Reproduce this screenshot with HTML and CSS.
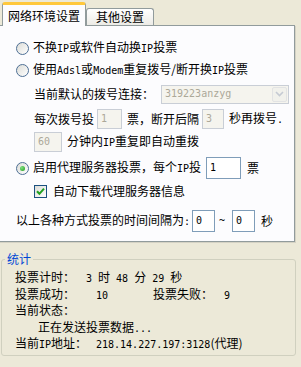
FILE: index.html
```html
<!DOCTYPE html>
<html>
<head>
<meta charset="utf-8">
<link rel="stylesheet" href="styles.css">
</head>
<body>
<div class="tabs">
  <div class="tab active">网络环境设置</div>
  <div class="tab">其他设置</div>
</div>
<div class="panel">
  <div class="row r1"><span class="radio"></span><span>不换<span class="en">IP</span>或软件自动换<span class="en">IP</span>投票</span></div>
  <div class="row r2"><span class="radio"></span><span>使用<span class="en">Adsl</span>或<span class="en">Modem</span>重复拨号/断开换<span class="en">IP</span>投票</span></div>
  <div class="row r3 indent"><span>当前默认的拨号连接：</span>
    <div class="combo"><span class="en">319223anzyg</span><span class="combo-btn"><svg width="9" height="6" viewBox="0 0 9 6"><path d="M1 1 L4.5 4.5 L8 1" fill="none" stroke="#C5CAD3" stroke-width="1.6"/></svg></span></div>
  </div>
  <div class="row r4 indent"><span>每次拨号投</span><span class="input disabled w25"><span class="en">1</span></span><span class="sp5">票，</span><span>断开后隔</span><span class="input disabled w22"><span class="en">3</span></span><span class="sp5">秒再拨号<span class="en">.</span></span></div>
  <div class="row r5 indent"><span class="input disabled w28 first"><span class="en">60</span></span><span class="sp5">分钟内<span class="en">IP</span>重复即自动重拨</span></div>
  <div class="row r6"><span class="radio checked"></span><span>启用代理服务器投票，每个<span class="en">IP</span>投</span><span class="input w35 tall"><span class="en">1</span></span><span class="sp6">票</span></div>
  <div class="row r7 indent"><span class="check"><svg width="9" height="9" viewBox="0 0 9 9"><path d="M1 4.2 L3.4 6.8 L8 1.6" fill="none" stroke="#21A121" stroke-width="2"/></svg></span><span>自动下载代理服务器信息</span></div>
  <div class="row r8"><span>以上各种方式投票的时间间隔为<span class="en">:</span></span><span class="input w23 tall sp2"><span class="en">0</span></span><span class="tilde">~</span><span class="input w23 tall"><span class="en">0</span></span><span class="sp6">秒</span></div>
</div>
<fieldset class="stats">
  <legend>统计</legend>
  <div class="stat-body">
    <div class="stat-row"><span class="lbl l71">投票计时：</span><span class="en">3 </span>时<span class="en"> 48 </span>分<span class="en"> 29 </span>秒</div>
    <div class="stat-row"><span class="lbl l81">投票成功：</span><span class="en v57">10</span><span class="lbl l71">投票失败：</span><span class="en">9</span></div>
    <div class="stat-row"><span>当前状态：</span></div>
    <div class="stat-row status">正在发送投票数据<span class="en">...</span></div>
    <div class="stat-row"><span class="lbl l81">当前<span class="en">IP</span>地址：</span><span class="en">218.14.227.197:3128</span><span>(代理)</span></div>
  </div>
</fieldset>
</body>
</html>
```
FILE: styles.css
```css
* { box-sizing: border-box; }
html, body { margin: 0; padding: 0; }
body {
  width: 301px;
  height: 367px;
  overflow: hidden;
  background: #ECE9D8;
  font-family: "Noto Sans CJK SC", sans-serif;
  font-size: 12px;
  line-height: 14px;
  color: #000;
}
.en { font-family: "DejaVu Sans Mono", monospace; font-size: 10px; }

.tabs {
  display: flex;
  align-items: flex-end;
  height: 25px;
  padding-left: 2px;
  position: relative;
  z-index: 1;
}
.tab {
  width: 68px;
  height: 17px;
  border: 1px solid #919B9C;
  border-bottom: none;
  border-radius: 3px 3px 0 0;
  background: linear-gradient(#FFFFFF, #ECEBE6);
  display: flex;
  justify-content: center;
  align-items: center;
}
.tab.active {
  width: 84px;
  height: 24px;
  margin-bottom: -1px;
  background: #FCFCFE;
  border-top: 3px solid #FFC83C;
  box-shadow: inset 0 -1px 0 #FCFCFE;
}

.panel {
  margin-left: -1px;
  width: 296px;
  height: 217px;
  border: 1px solid #919B9C;
  background: #FCFCFE;
  padding-top: 11px;
  box-shadow: 1px 1px 0 #D5D2C4;
}
.row { display: flex; align-items: center; white-space: nowrap; }
.r1 { height: 22px; padding-left: 16px; }
.r2 { height: 22px; padding-left: 16px; }
.r3 { height: 26px; }
.r4 { height: 24px; }
.r5 { height: 22px; }
.r6 { height: 30px; padding-left: 16px; }
.r7 { height: 16px; }
.r8 { height: 22px; margin-top: 11px; padding-left: 16px; }
.indent { padding-left: 34px; }

.radio {
  width: 13px;
  height: 13px;
  border-radius: 50%;
  border: 1px solid #4E6F95;
  background: linear-gradient(135deg, #DCDCD7, #FFFFFF);
  margin-right: 4px;
  display: flex;
  align-items: center;
  justify-content: center;
  flex: none;
}
.radio.checked::after {
  content: "";
  width: 5px;
  height: 5px;
  border-radius: 50%;
  background: radial-gradient(circle at 35% 35%, #7FE07F, #1E9A1E);
}
.check {
  width: 13px;
  height: 13px;
  border: 1px solid #1C5180;
  background: linear-gradient(135deg, #DCDCD7, #FFFFFF);
  margin-right: 6px;
  display: flex;
  align-items: center;
  justify-content: center;
  flex: none;
}

.combo {
  margin-left: 7px;
  width: 128px;
  height: 19px;
  border: 1px solid #C9CED6;
  background: #F5F4EE;
  color: #ACA899;
  display: flex;
  align-items: center;
  justify-content: space-between;
  padding-left: 3px;
}
.combo-btn {
  width: 15px;
  height: 15px;
  margin-right: 1px;
  border-radius: 2px;
  background: #F1F1EC;
  border: 1px solid #E2E3E4;
  display: flex;
  align-items: center;
  justify-content: center;
}

.input {
  height: 20px;
  border: 1px solid #7F9DB9;
  background: #fff;
  display: flex;
  align-items: center;
  padding-left: 3px;
  margin-left: 3px;
}
.input.disabled { border-color: #C9CED6; background: #F5F4EE; color: #ACA899; }
.input.first { margin-left: 0; }
.input.tall { height: 22px; }
.w22 { width: 22px; }
.w23 { width: 23px; }
.w25 { width: 25px; }
.w28 { width: 28px; }
.w35 { width: 35px; margin-left: 5px; }
.sp2 { margin-left: 2px; }
.sp5 { margin-left: 5px; }
.sp6 { margin-left: 6px; }
.tilde { margin: 0 4px; font-family: "DejaVu Sans Mono", monospace; font-size: 10px; }

.stats {
  margin: 10px 5px 0 1px;
  padding: 0;
  height: 104px;
  border: 1px solid #D0D0BF;
  border-radius: 3px;
}
.stats legend {
  margin-left: 3px;
  padding: 0 2px;
  color: #0046D5;
  line-height: 14px;
}
.stat-body { padding: 3px 0 0 13px; }
.stat-row { display: flex; align-items: baseline; height: 16.5px; line-height: 16.5px; white-space: pre; }
.lbl { display: inline-block; }
.l71 { width: 71px; }
.l81 { width: 81px; }
.v57 { width: 57px; display: inline-block; }
.status { padding-left: 23px; }
```
